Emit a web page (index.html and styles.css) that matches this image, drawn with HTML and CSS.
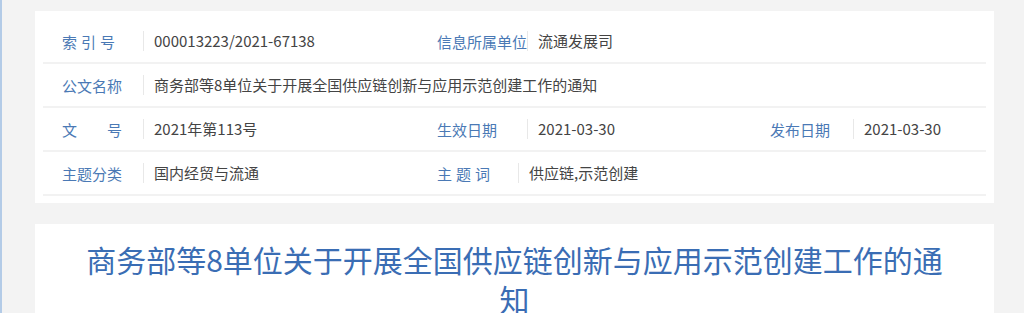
FILE: index.html
```html
<!DOCTYPE html>
<html lang="zh-CN">
<head>
  <meta charset="UTF-8" />
  <meta name="viewport" content="width=device-width, initial-scale=1.0"/>
  <title>商务部等8单位关于开展全国供应链创新与应用示范创建工作的通知</title>
  <link rel="stylesheet" href="styles.css">
</head>
<body>
  <div class="page">
    <section class="info-card">
      <div class="info-row">
        <span class="label label-a spaced">索引号</span>
        <span class="value value-a">000013223/2021-67138</span>
        <span class="label label-b">信息所属单位</span>
        <span class="value">流通发展司</span>
      </div>
      <div class="info-row">
        <span class="label label-a">公文名称</span>
        <span class="value">商务部等8单位关于开展全国供应链创新与应用示范创建工作的通知</span>
      </div>
      <div class="info-row">
        <span class="label label-a wide-spaced">文号</span>
        <span class="value value-a">2021年第113号</span>
        <span class="label label-b">生效日期</span>
        <span class="value value-b">2021-03-30</span>
        <span class="label label-c">发布日期</span>
        <span class="value">2021-03-30</span>
      </div>
      <div class="info-row">
        <span class="label label-a">主题分类</span>
        <span class="value value-a">国内经贸与流通</span>
        <span class="label label-a spaced">主题词</span>
        <span class="value">供应链,示范创建</span>
      </div>
    </section>

    <section class="article-card">
      <h1 class="article-title">商务部等8单位关于开展全国供应链创新与应用示范创建工作的通知</h1>
    </section>
  </div>
</body>
</html>
```

FILE: styles.css
```css
* { margin: 0; padding: 0; box-sizing: border-box; }
body {
  font-family: "Noto Sans CJK SC", "Noto Sans", sans-serif;
  background: #f3f3f3;
  color: #444;
  border-left: 2px solid #b3cbe7;
  min-height: 100vh;
}
.page { padding: 11px 30px 20px 33px; }

.info-card {
  background: #fff;
  padding: 9px 8px 7px;
}
.info-row {
  display: flex;
  align-items: center;
  height: 44px;
  padding-left: 19px;
  border-bottom: 2px solid #f2f2f2;
  font-size: 15px;
}
.label {
  color: #4a79b5;
  white-space: nowrap;
  flex-shrink: 0;
}
.label-a { width: 81px; }
.label-b { width: 90px; }
.label-c { width: 83px; }
.spaced { letter-spacing: 4px; }
.wide-spaced { letter-spacing: 30px; }
.value {
  line-height: 20px;
  border-left: 1px solid #e8e8e8;
  padding-left: 10px;
  white-space: nowrap;
}
.value-a { width: 294px; }
.value-b { width: 243px; }

.article-card {
  background: #fff;
  margin-top: 21px;
  padding: 16px 40px 40px;
}
.article-title {
  font-size: 30px;
  font-weight: normal;
  line-height: 39px;
  color: #3a6db4;
  text-align: center;
}
```
